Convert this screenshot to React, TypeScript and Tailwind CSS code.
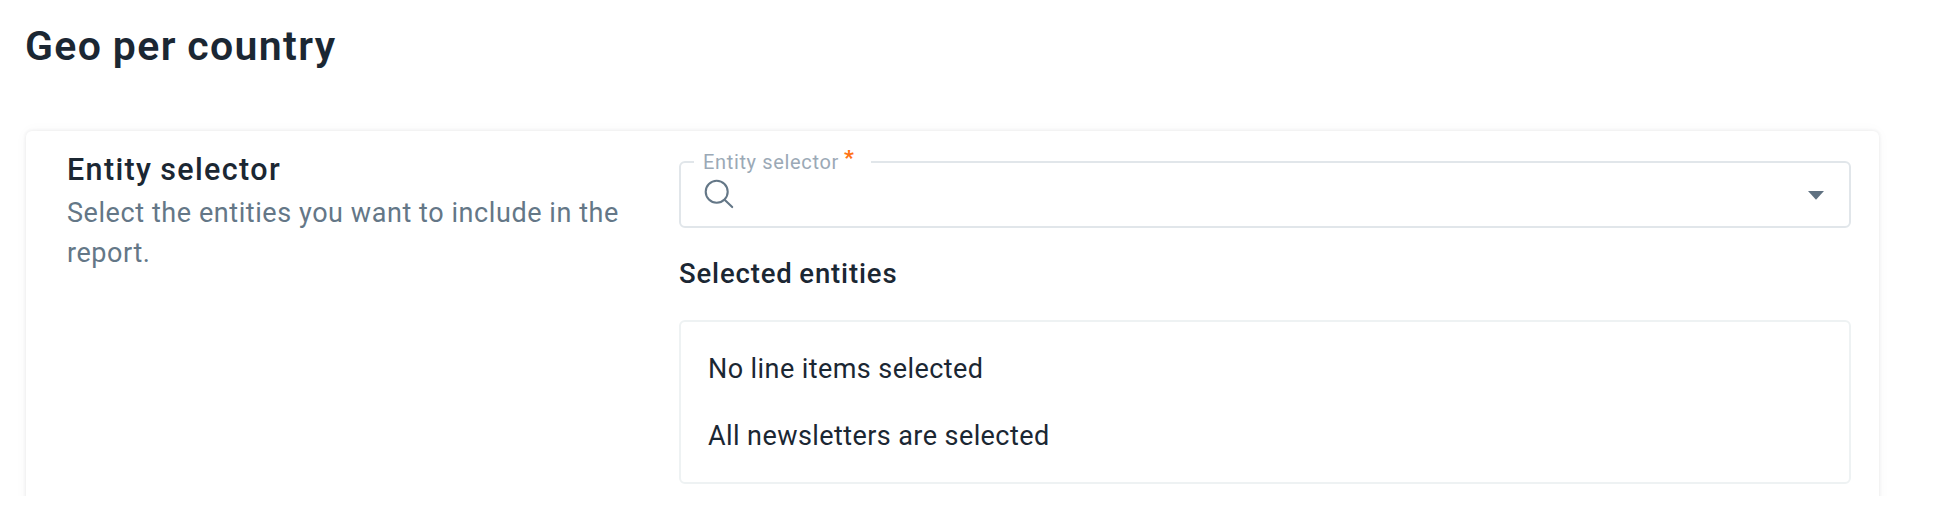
const summary = ['No line items selected', 'All newsletters are selected']

function SearchIcon() {
  return (
    <svg className="w-[30px] h-[30px] -mt-0.5 text-[#647787]" viewBox="0 0 30 30" fill="none" stroke="currentColor" strokeWidth="2.1" strokeLinecap="round">
      <circle cx="12.7" cy="12.8" r="11" />
      <path d="M20.6 20.8L28.2 28.1" />
    </svg>
  )
}

function EntitySelect() {
  return (
    <div className="relative h-[67px] border-2 border-[#e1e6ea] rounded-md flex items-center justify-between pl-[23px] pr-[25px]">
      <label className="absolute left-[13px] -top-[17px] h-8 w-[177px] pl-[9px] bg-white text-[20px] leading-8 text-[#9ba9b6] whitespace-nowrap">
        <span className="tracking-[0.65px]">Entity selector</span>
        <span className="absolute left-[150px] -top-1 text-[21px] font-black text-[#ff7315]">*</span>
      </label>
      <SearchIcon />
      <svg className="w-4 h-[9px] mt-px text-[#5f7181]" viewBox="0 0 16 9" fill="currentColor">
        <path d="M0 0H16L8 8.7Z" />
      </svg>
    </div>
  )
}

export default function App() {
  return (
    <div className="h-[509px] bg-white overflow-hidden font-[Roboto,sans-serif] text-[#1b2733]">
      <div className="h-[496px] overflow-hidden pl-[26px] pr-[57px]">
        <h1 className="h-[131px] pt-[22px] -ml-px text-[41px] leading-[48px] font-semibold tracking-[1.35px] [word-spacing:-1px]">
          <span>Geo per country</span>
        </h1>

        <section className="flex h-[420px] rounded-md bg-white pl-[41px] pr-[28px] shadow-[0_0_3px_1px_rgba(30,40,50,0.06),0_0_14px_rgba(30,40,50,0.035)]">
          <div className="w-[612px] shrink-0 pt-[19px]">
            <h2 className="text-[30.5px] leading-10 font-medium tracking-[1.35px] [word-spacing:-1px]">
              <span>Entity selector</span>
            </h2>
            <p className="w-[590px] mt-[3px] text-[27px] leading-[40px] tracking-[0.57px]">
              <span className="text-[#647787]">Select the entities you want to include in the report.</span>
            </p>
          </div>

          <div className="flex-1 pt-[30px]">
            <EntitySelect />
            <h3 className="mt-[26px] text-[27.5px] leading-10 font-medium tracking-[0.85px] [word-spacing:-1px]">
              <span>Selected entities</span>
            </h3>
            <div className="mt-[26px] h-[164px] border-2 border-[#eef2f3] rounded-md pl-[27px] pt-[27px]">
              {summary.map((line) => (
                <p key={line} className="mb-[27px] text-[27px] leading-10 tracking-[0.42px]">
                  <span>{line}</span>
                </p>
              ))}
            </div>
          </div>
        </section>
      </div>
    </div>
  )
}
